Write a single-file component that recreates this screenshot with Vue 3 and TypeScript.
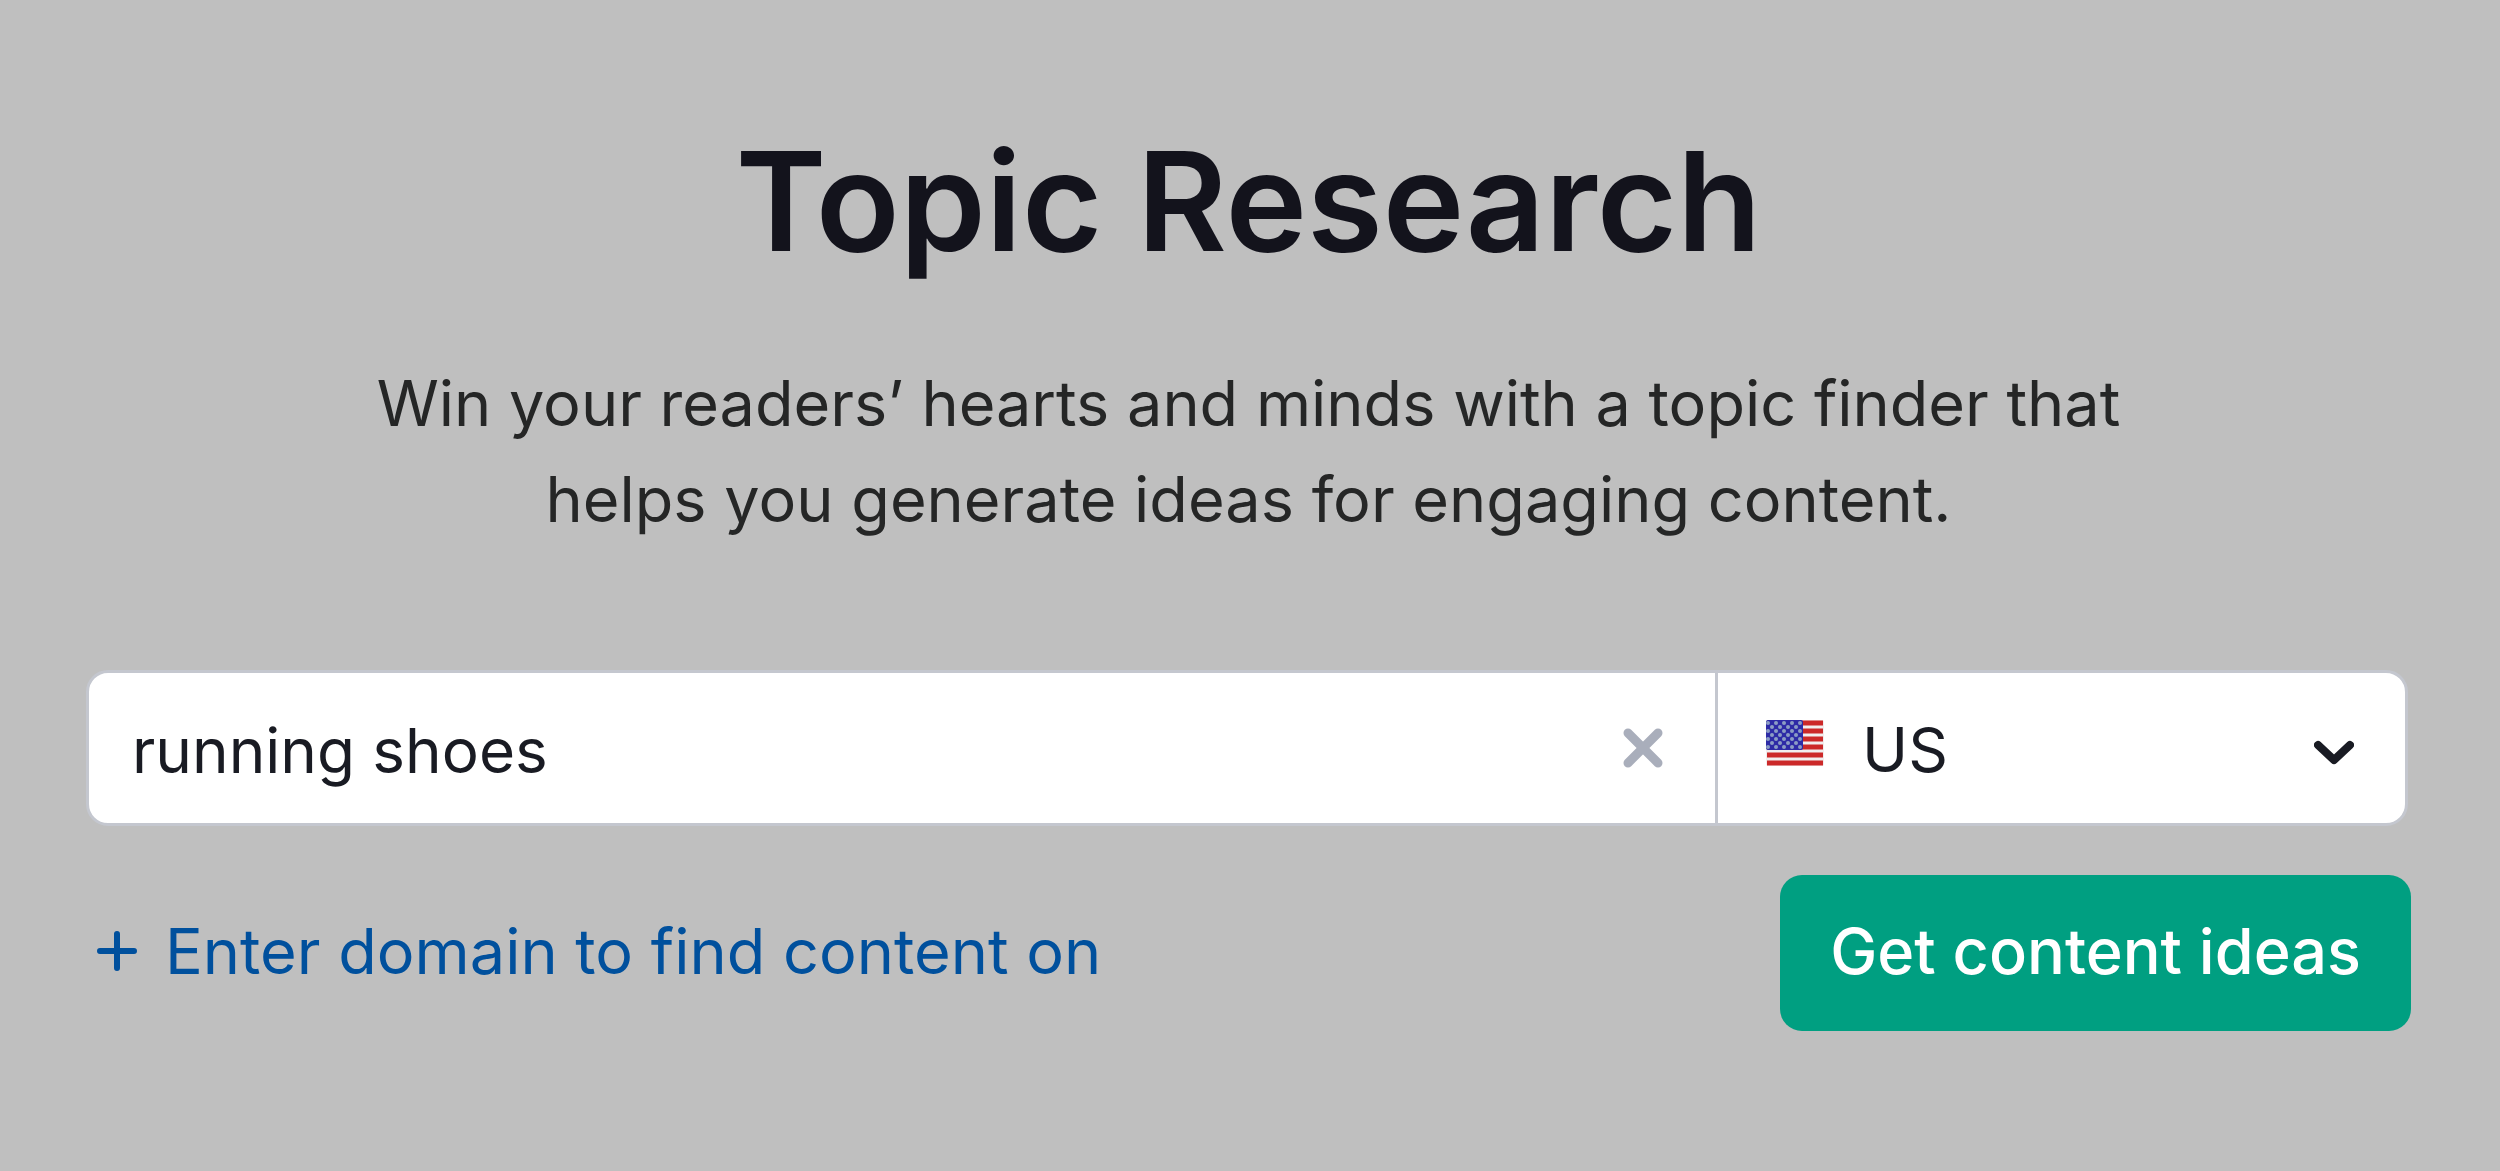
<script setup lang="ts">
import { ref } from 'vue'

interface Point {
  x: number
  y: number
}

const topic = ref<string>('running shoes')
const country = ref<string>('US')
const countries: string[] = ['US', 'UK', 'CA', 'AU']

// Staggered star field of the flag's canton
const stars: Point[] = []
for (let row = 0; row < 7; row++) {
  for (let x = row % 2 ? 6 : 2; x < 36; x += 8) {
    stars.push({ x, y: 3 + row * 4 })
  }
}
</script>

<template>
  <main class="page">
    <h1 class="title">Topic Research</h1>
    <p class="lead">
      Win your readers’ hearts and minds with a topic finder that helps you generate ideas for engaging content.
    </p>

    <form class="form" @submit.prevent>
      <div class="fields">
        <div class="topic">
          <input v-model="topic" class="topic-input" type="text" aria-label="Topic" />
          <button class="clear" type="button" aria-label="Clear" @click="topic = ''">
            <svg width="40" height="40" viewBox="0 0 40 40" fill="none" stroke="#a9aebb" stroke-width="9" stroke-linecap="round">
              <path d="M5 5L35 35M35 5L5 35" />
            </svg>
          </button>
        </div>
        <div class="country">
          <select v-model="country" class="country-select" aria-label="Country">
            <option v-for="code in countries" :key="code" :value="code">{{ code }}</option>
          </select>
          <svg class="flag" width="58" height="46" viewBox="0 0 58 46" aria-hidden="true">
            <rect width="58" height="46" rx="2" fill="#f1eeee" />
            <path d="M1 3H57M1 11H57M1 19H57M1 27H57M1 35H57M1 43H57" stroke="#cc2929" stroke-width="5" />
            <rect width="37" height="30" rx="2" fill="#2d2ba6" />
            <circle v-for="(s, i) in stars" :key="i" :cx="s.x" :cy="s.y" r="2" fill="#8b9dc4" />
          </svg>
          <svg class="chevron" width="40" height="26" viewBox="0 0 40 26" fill="none" stroke="#191b23" stroke-width="8" stroke-linecap="round" stroke-linejoin="round" aria-hidden="true">
            <path d="M4 5L20 20L36 5" />
          </svg>
        </div>
      </div>

      <div class="actions">
        <a class="domain" href="#">
          <svg width="40" height="40" viewBox="0 0 40 40" fill="none" stroke="#00509d" stroke-width="6" stroke-linecap="round" aria-hidden="true">
            <path d="M20 3V37M3 20H37" />
          </svg>
          Enter domain to find content on
        </a>
        <button class="submit" type="submit">Get content ideas</button>
      </div>
    </form>
  </main>
</template>

<style>
body {
  margin: 0;
  background: #bfbfbf;
}
</style>

<style scoped>
.page {
  box-sizing: border-box;
  min-height: 100vh;
  padding: 113px 89px 64px 86px;
  background: #bfbfbf;
  font-family: Inter, "Liberation Sans", sans-serif;
  font-size: 63px;
  line-height: 96px;
  color: #191b23;
}

.title {
  margin: 0;
  font-size: 138px;
  font-weight: 600;
  line-height: 176px;
  text-align: center;
  color: #13131c;
}

.lead {
  max-width: 1840px;
  margin: 66px auto 0;
  text-align: center;
  color: #252626;
}

.form {
  margin-top: 123px;
}

.fields {
  display: flex;
  box-sizing: border-box;
  height: 156px;
  margin-right: 3px;
  border: 3px solid #c4c7cf;
  border-radius: 22px;
  background: #fff;
  font-size: 62px;
}

.topic {
  display: flex;
  flex: 1;
  align-items: center;
  min-width: 0;
  padding: 0 52px 0 43px;
  border-right: 3px solid #c4c7cf;
}

.topic-input {
  box-sizing: border-box;
  flex: 1;
  min-width: 0;
  height: 100%;
  padding: 4px 0 0;
  border: 0;
  outline: 0;
  background: none;
  font: inherit;
  color: inherit;
}

.clear {
  display: flex;
  padding: 0;
  border: 0;
  background: none;
}

.country {
  position: relative;
  width: 687px;
}

.country-select {
  appearance: none;
  width: 100%;
  height: 100%;
  padding: 4px 96px 0 144px;
  border: 0;
  outline: 0;
  background: none;
  font: inherit;
  color: inherit;
}

.flag {
  position: absolute;
  top: 47px;
  left: 48px;
  pointer-events: none;
}

.chevron {
  position: absolute;
  top: 67px;
  right: 51px;
  pointer-events: none;
}

.actions {
  display: flex;
  align-items: center;
  justify-content: space-between;
  margin-top: 49px;
}

.domain {
  display: flex;
  align-items: center;
  gap: 28px;
  padding: 0 0 4px 11px;
  color: #00509d;
  text-decoration: none;
}

.submit {
  height: 156px;
  padding: 0 50px 4px;
  border: 0;
  border-radius: 22px;
  background: #009f81;
  font: inherit;
  font-weight: 500;
  color: #fff;
}
</style>
